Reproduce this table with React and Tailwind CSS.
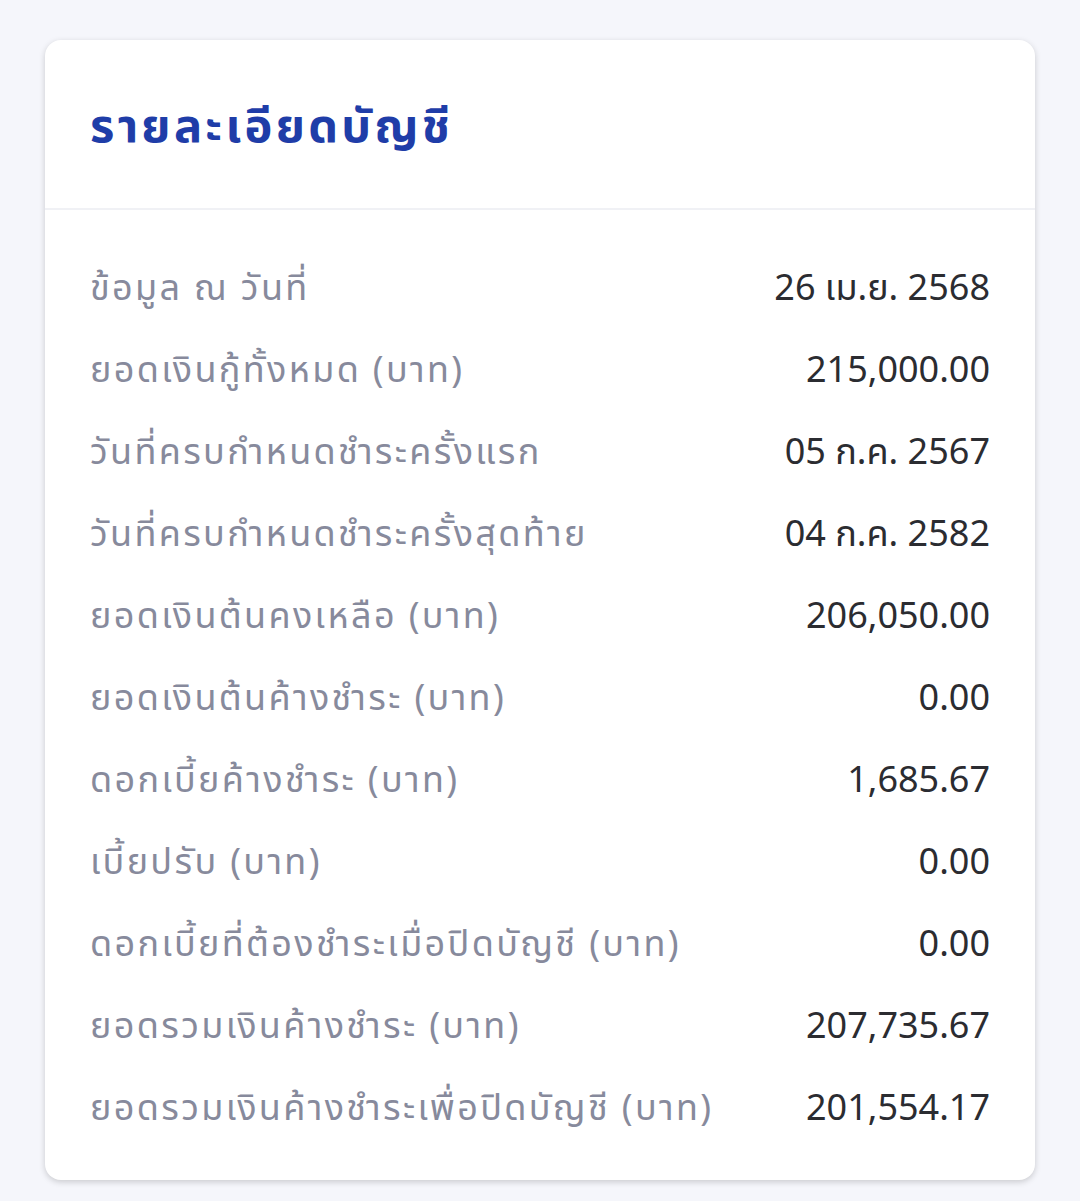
const rows = [
  { label: "ข้อมูล ณ วันที่", value: "26 เม.ย. 2568" },
  { label: "ยอดเงินกู้ทั้งหมด (บาท)", value: "215,000.00" },
  { label: "วันที่ครบกำหนดชำระครั้งแรก", value: "05 ก.ค. 2567" },
  { label: "วันที่ครบกำหนดชำระครั้งสุดท้าย", value: "04 ก.ค. 2582" },
  { label: "ยอดเงินต้นคงเหลือ (บาท)", value: "206,050.00" },
  { label: "ยอดเงินต้นค้างชำระ (บาท)", value: "0.00" },
  { label: "ดอกเบี้ยค้างชำระ (บาท)", value: "1,685.67" },
  { label: "เบี้ยปรับ (บาท)", value: "0.00" },
  { label: "ดอกเบี้ยที่ต้องชำระเมื่อปิดบัญชี (บาท)", value: "0.00" },
  { label: "ยอดรวมเงินค้างชำระ (บาท)", value: "207,735.67" },
  { label: "ยอดรวมเงินค้างชำระเพื่อปิดบัญชี (บาท)", value: "201,554.17" },
];

export default function App() {
  return (
    <div className="min-h-[1201px] bg-[#f5f6fb] px-[45px] pt-[40px] font-['Noto_Sans','Noto_Sans_Thai',sans-serif]">
      <div className="rounded-[16px] bg-white shadow-[0_2px_6px_rgba(0,0,0,0.18)]">
        {/* Header */}
        <div className="flex h-[170px] items-center border-b-2 border-[#f0f1f5] px-[45px]">
          <h1 className="text-[47px] font-bold leading-none tracking-[0.07em] text-[#1f3da8]">
            รายละเอียดบัญชี
          </h1>
        </div>

        {/* Rows */}
        <div className="px-[45px] pt-[36px] pb-[32px]">
          {rows.map((row) => (
            <div
              key={row.label}
              className="flex h-[82px] items-center justify-between"
            >
              <span className="text-[36px] tracking-[0.065em] text-[#878a9c]">
                {row.label}
              </span>
              <span className="text-[36px] text-[#2b2c31]">{row.value}</span>
            </div>
          ))}
        </div>
      </div>
    </div>
  );
}
